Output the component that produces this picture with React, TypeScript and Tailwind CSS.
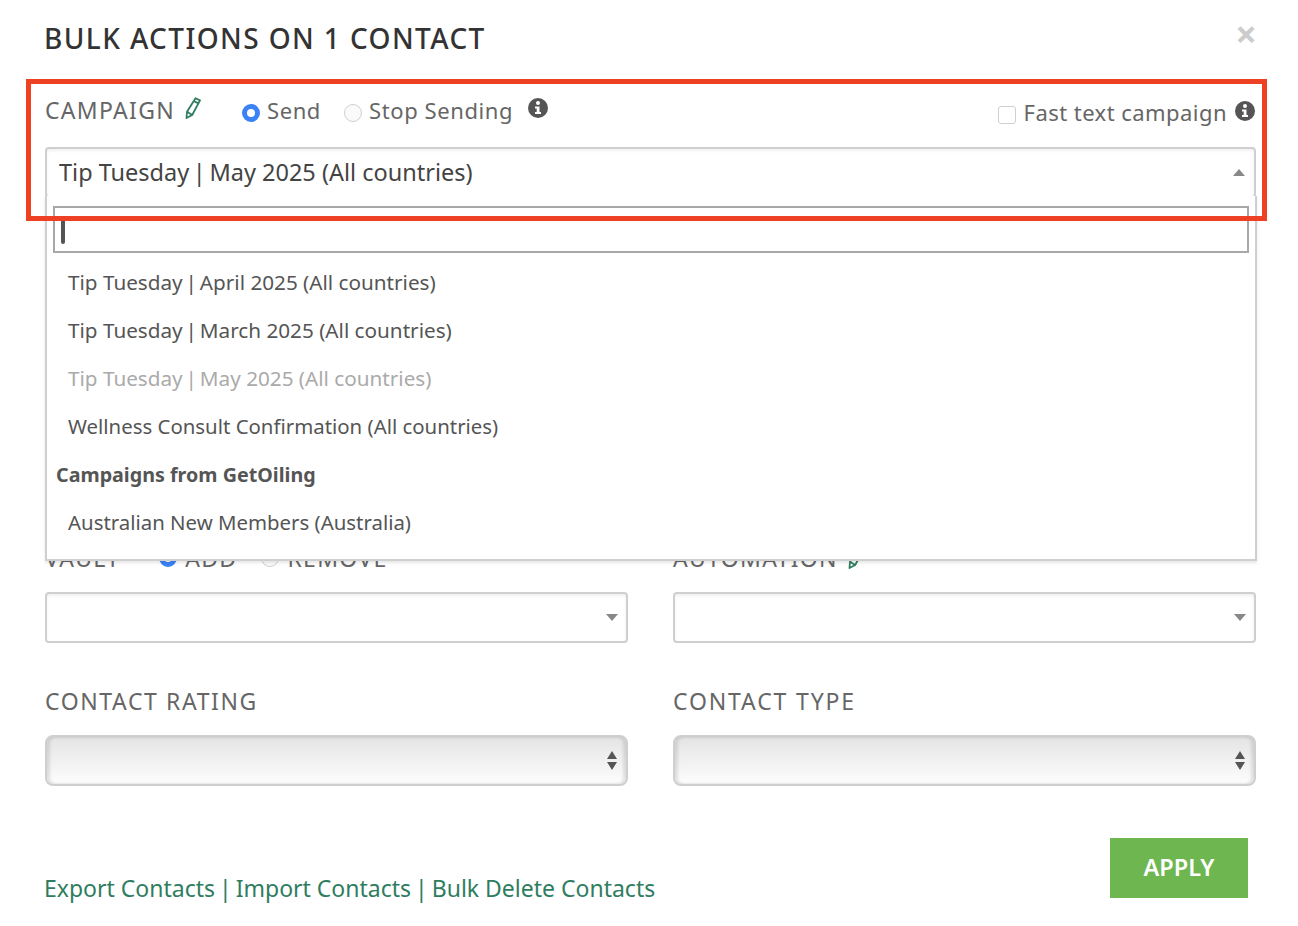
const font = { fontFamily: '"Noto Sans", sans-serif' };

function Pencil({ className }: { className: string }) {
  return (
    <svg viewBox="0 0 16 22" className={className} fill="none" stroke="#2f7d5f" strokeWidth="1.8" strokeLinejoin="round">
      <path d="M10.5 1.2 L15 3.4 L7.2 18 L1.5 21 L2 14.8 Z" />
      <path d="M2 14.8 L7.2 18" />
      <path d="M9 4.2 L13.6 6.4" />
    </svg>
  );
}

function InfoDot({ className }: { className: string }) {
  return (
    <svg viewBox="0 0 20 20" className={className}>
      <circle cx="10" cy="10" r="10" fill="#555" />
      <circle cx="10" cy="5" r="2" fill="#fff" />
      <path d="M7 8.5 H11.5 V14 H13 V16 H7 V14 H8.7 V10.5 H7 Z" fill="#fff" />
    </svg>
  );
}

function Radio({ on }: { on?: boolean }) {
  if (on) {
    return <span className="w-[18px] h-[18px] rounded-full border-[5px] border-[#3b82f6] bg-white inline-block" />;
  }
  return <span className="w-[18px] h-[18px] rounded-full border border-[#d0d0d0] bg-[#fafafa] inline-block" />;
}

function Caret({ up }: { up?: boolean }) {
  return (
    <svg viewBox="0 0 12 7" className="w-3 h-[7px]">
      <path d={up ? "M0 7 L6 0 L12 7 Z" : "M0 0 L12 0 L6 7 Z"} fill="#888" />
    </svg>
  );
}

function ChosenBox() {
  return (
    <div className="h-[51px] rounded-[4px] border-2 border-[#cfcfcf] bg-white flex items-center justify-end pr-[8px] shadow-[inset_0_2px_3px_rgba(0,0,0,0.06)]">
      <Caret />
    </div>
  );
}

function NativeBox() {
  return (
    <div className="h-[51px] rounded-[8px] border-2 border-[#cfcfcf] bg-gradient-to-b from-[#e4e4e4] to-[#fdfdfd] flex items-center justify-end pr-[9px] shadow-[inset_3px_0_3px_rgba(0,0,0,0.1),inset_-3px_0_3px_rgba(0,0,0,0.1)]">
      <span className="flex flex-col gap-[3px]">
        <svg viewBox="0 0 10 8" className="w-[10px] h-2"><path d="M0 8 L5 0 L10 8 Z" fill="#555" /></svg>
        <svg viewBox="0 0 10 8" className="w-[10px] h-2"><path d="M0 0 L10 0 L5 8 Z" fill="#555" /></svg>
      </span>
    </div>
  );
}

// the pipe sits tighter in the picture than Noto's spaces allow
function Pipe() {
  return <span className="mx-[-2.5px]">|</span>;
}

function TipLabel({ month }: { month: string }) {
  return (
    <>
      Tip Tuesday <Pipe /> {month} 2025 (All countries)
    </>
  );
}

export default function App() {
  const row = "h-[48px] leading-[48px] pl-[21px]";
  return (
    <div style={font} className="relative w-[1298px] h-[926px] overflow-hidden bg-white text-[#666]">
      <div className="pl-[45px] pr-[42px]">
        <div className="flex items-start justify-between pt-[20px] h-[79px]">
          <h1 className="text-[28px] leading-[36px] tracking-[1.4px] font-medium text-[#333] -ml-[1px]">BULK ACTIONS ON 1 CONTACT</h1>
          <span className="text-[#ccc] text-[38px] font-bold leading-[26px] -mr-[1px]">×</span>
        </div>

        <div className="flex items-start h-[68px] pt-[14px]">
          <span className="text-[23px] leading-[34px] tracking-[1.3px]">CAMPAIGN</span>
          <Pencil className="w-[16px] h-[22px] ml-[10px] mt-[4px]" />
          <span className="ml-[41px] mt-[11px]"><Radio on /></span>
          <span className="ml-[7px] text-[22px] leading-[34px] tracking-[0.6px]">Send</span>
          <span className="ml-[23px] mt-[11px]"><Radio /></span>
          <span className="ml-[7px] text-[22px] leading-[34px] tracking-[0.6px]">Stop Sending</span>
          <InfoDot className="w-5 h-5 ml-[15px] mt-[5px]" />
          <span className="ml-auto mt-[13px] w-[18px] h-[18px] rounded-[3px] border border-[#d0d0d0]" />
          <span className="ml-[8px] mt-[2px] text-[22px] leading-[34px] tracking-[0.45px]">Fast text campaign</span>
          <InfoDot className="w-5 h-5 ml-[8px] mt-[8px] mr-[1px]" />
        </div>

        <div className="w-[1211px] h-[51px] rounded-[4px] border-2 border-[#cfcfcf] bg-white flex items-center justify-between pl-[12px] pr-[9px] text-[23.5px] text-[#444] shadow-[inset_0_2px_3px_rgba(0,0,0,0.06)]">
          <span><TipLabel month="May" /></span>
          <Caret up />
        </div>

        <div className="h-[343px]" />

        <div className="grid grid-cols-2 gap-x-[45px] w-[1211px]">
          <div>
            <div className="flex items-center h-[34px] text-[23px] tracking-[1.3px] mb-[17px]">
              VAULT
              <span className="ml-[39px] flex"><Radio on /></span>
              <span className="ml-2">ADD</span>
              <span className="ml-[24px] flex"><Radio /></span>
              <span className="ml-2">REMOVE</span>
            </div>
            <ChosenBox />
          </div>
          <div>
            <div className="flex items-center h-[34px] text-[23px] tracking-[1.3px] mb-[17px]">
              AUTOMATION
              <Pencil className="w-[16px] h-[22px] ml-[10px]" />
            </div>
            <ChosenBox />
          </div>
          <div className="mt-[41px]">
            <div className="h-[34px] leading-[34px] text-[23px] tracking-[1.6px] mb-[17px]">CONTACT RATING</div>
            <NativeBox />
          </div>
          <div className="mt-[41px]">
            <div className="h-[34px] leading-[34px] text-[23px] tracking-[1.85px] mb-[17px]">CONTACT TYPE</div>
            <NativeBox />
          </div>
        </div>

        <div className="flex items-end justify-between w-[1203px] mt-[52px]">
          <div className="text-[23px] leading-[34px] text-[#2f7d5f] mb-[-7px] -ml-[1px]">
            Export Contacts <span className="mx-[-2px]">|</span> Import Contacts <span className="mx-[-2px]">|</span> Bulk Delete Contacts
          </div>
          <button className="w-[138px] h-[60px] bg-[#6eb650] text-white text-[23.5px] font-semibold">APPLY</button>
        </div>
      </div>

      {/* open dropdown sits over the form */}
      <div className="absolute left-[45px] top-[196px] w-[1212px] h-[365px] bg-white border-2 border-t-0 border-[#cfcfcf] shadow-[0_2px_3px_rgba(0,0,0,0.1)] pt-[10px]">
        <div className="ml-[6px] mr-[6px] h-[47px] border-2 border-[#a8a8a8] flex items-center pl-[6px]">
          <span className="w-[4px] h-[28px] bg-[#555] rounded-sm" />
        </div>
        <ul className="mt-[5px] text-[#555]">
          <li className={`${row} text-[20.7px]`}><TipLabel month="April" /></li>
          <li className={`${row} text-[20.7px]`}><TipLabel month="March" /></li>
          <li className={`${row} text-[20.7px] text-[#aaa]`}><TipLabel month="May" /></li>
          <li className={`${row} text-[20.4px]`}>Wellness Consult Confirmation (All countries)</li>
          <li className="h-[48px] leading-[50px] pl-[9px] text-[19.7px] font-bold">Campaigns from GetOiling</li>
          <li className={`${row} text-[20.4px]`}>Australian New Members (Australia)</li>
        </ul>
      </div>

      {/* red annotation box */}
      <div className="absolute left-[26px] top-[79px] w-[1241px] h-[142px] border-[5px] border-[#ee4023] pointer-events-none" />
    </div>
  );
}
